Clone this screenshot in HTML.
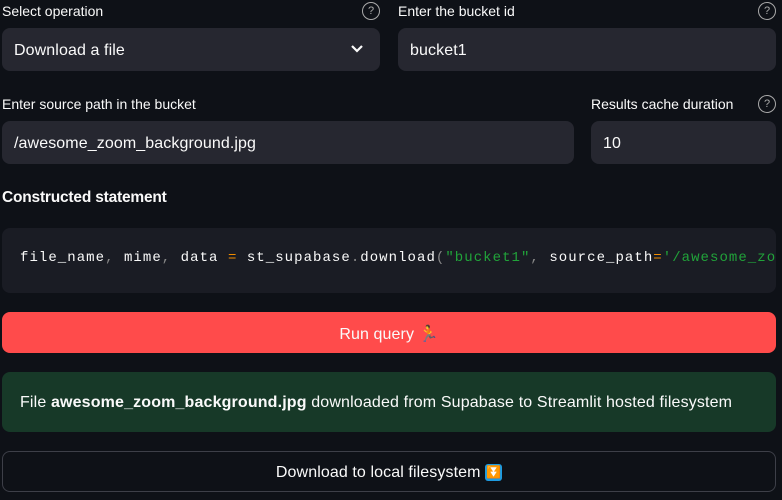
<!DOCTYPE html>
<html><head><style>
*{box-sizing:border-box;margin:0;padding:0}
body{width:782px;height:500px;background:#0e1117;color:#fafafa;font-family:"Liberation Sans",sans-serif;position:relative;overflow:hidden}
.a{position:absolute}
.lbl{font-size:14px;letter-spacing:0px;color:#fafafa}
.box{background:#262730;border-radius:8px;font-size:16px;letter-spacing:0.1px;padding-left:12px;padding-top:2px;display:flex;align-items:center}
.q{width:18px;height:18px;border:1.5px solid #aaa;border-radius:50%;font-size:11px;color:#aaa;display:flex;align-items:center;justify-content:center}
</style></head><body>
<div class="a lbl" style="left:2px;top:3px">Select operation</div>
<div class="a q" style="left:362px;top:2px">?</div>
<div class="a lbl" style="left:398px;top:3px">Enter the bucket id</div>
<div class="a q" style="left:758px;top:2px">?</div>
<div class="a box" style="left:2px;top:28px;width:378px;height:43px">Download a file
<svg class="a" style="left:348px;top:16px" width="14" height="10" viewBox="0 0 14 10"><path d="M2 2l5 5 5-5" stroke="#fafafa" stroke-width="2.2" fill="none"/></svg></div>
<div class="a box" style="left:398px;top:28px;width:378px;height:43px">bucket1</div>
<div class="a lbl" style="left:2px;top:96px">Enter source path in the bucket</div>
<div class="a lbl" style="left:591px;top:96px">Results cache duration</div>
<div class="a q" style="left:758px;top:95px">?</div>
<div class="a box" style="left:2px;top:121px;width:572px;height:43px">/awesome_zoom_background.jpg</div>
<div class="a box" style="left:591px;top:121px;width:185px;height:43px">10</div>
<div class="a" style="left:2px;top:189px;font-size:15.5px;font-weight:bold;letter-spacing:-0.2px">Constructed statement</div>
<div class="a" style="left:2px;top:228px;width:774px;height:65px;background:#1a1c24;border-radius:8px;overflow:hidden">
<div class="a" style="left:18px;top:22px;white-space:nowrap;font-family:'Liberation Mono',monospace;font-size:14px;letter-spacing:1.05px;color:#fafafa">file_name<span style="color:#888">,</span> mime<span style="color:#888">,</span> data <span style="color:#f08c00">=</span> st_supabase<span style="color:#888">.</span>download<span style="color:#888">(</span><span style="color:#21a33a">"bucket1"</span><span style="color:#888">,</span> source_path<span style="color:#f08c00">=</span><span style="color:#21a33a">'/awesome_zoom_background.jpg'</span></div></div>
<div class="a" style="left:2px;top:312px;width:774px;height:41px;background:#ff4b4b;border-radius:8px;display:flex;align-items:center;justify-content:center;font-size:16px;letter-spacing:0.1px;padding-top:2px">Run query 🏃</div>
<div class="a" style="left:2px;top:372px;width:774px;height:60px;background:#173928;border-radius:8px;display:flex;align-items:center;padding-left:18px;padding-top:2px;font-size:16px;letter-spacing:0.15px">File&nbsp;<b>awesome_zoom_background.jpg</b>&nbsp;downloaded from Supabase to Streamlit hosted filesystem</div>
<div class="a" style="left:2px;top:451px;width:774px;height:41px;border:1px solid #3d3f48;border-radius:8px;display:flex;align-items:center;justify-content:center;font-size:16px;letter-spacing:0.1px;padding-top:2px">Download to local filesystem&nbsp;<span style="display:inline-block;width:17px;height:17px;background:#1e9be0;border-radius:3px;color:#fff;font-size:12px;line-height:17px;text-align:center">⏬</span></div>
</body></html>
